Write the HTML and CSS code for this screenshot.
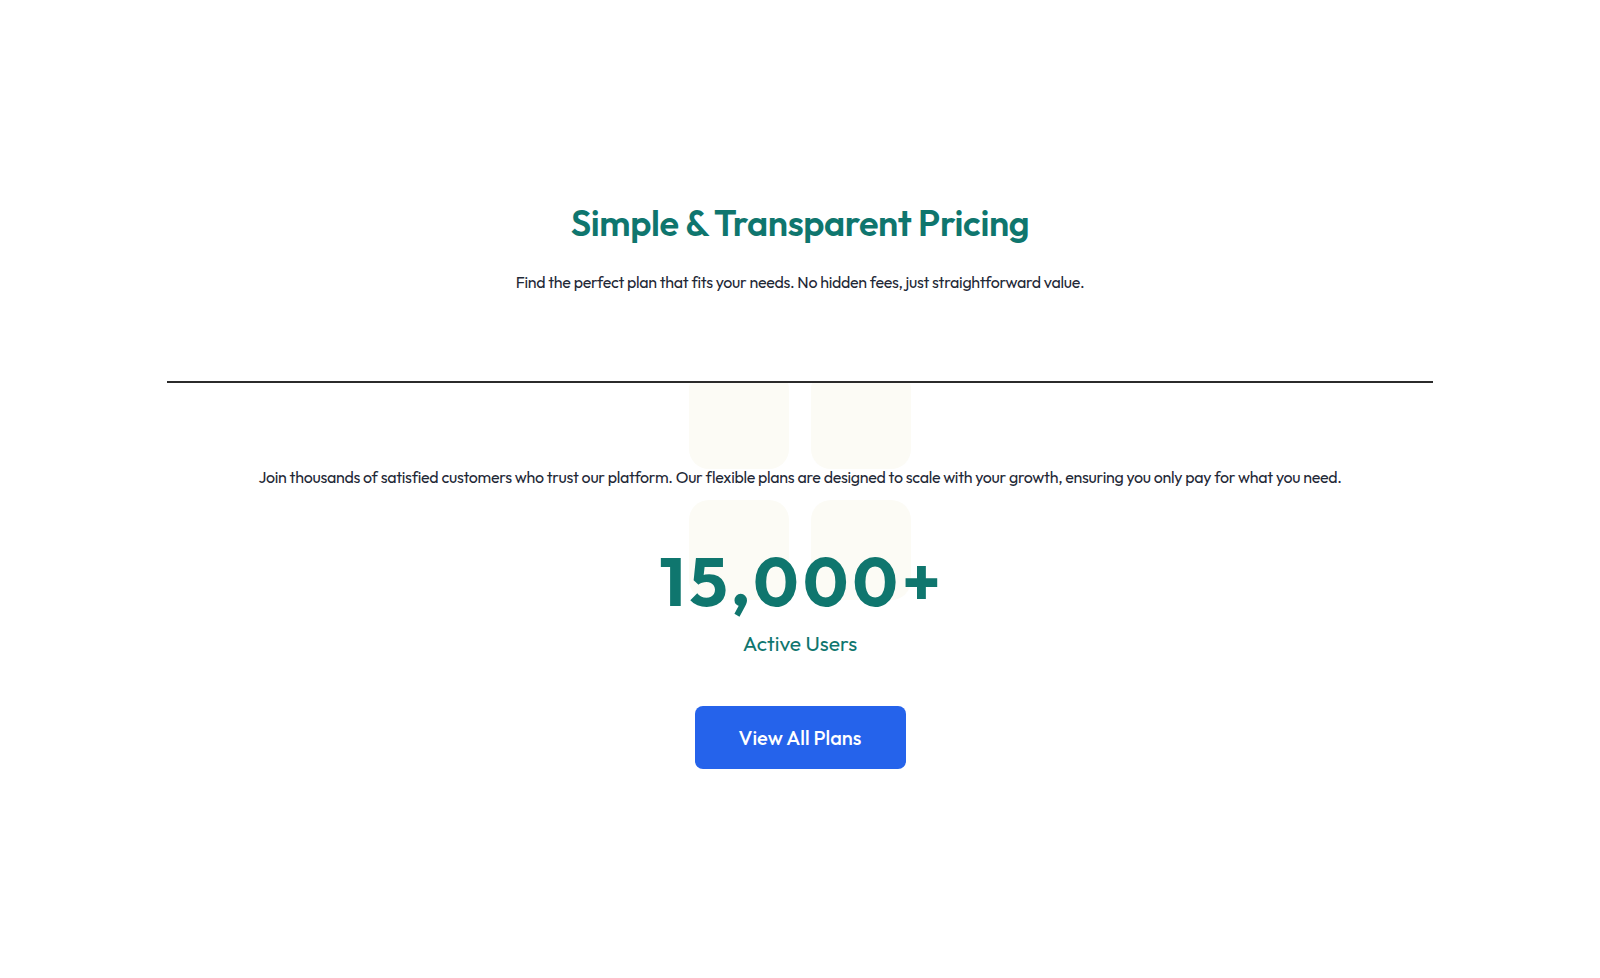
FILE: index.html
```html
<!DOCTYPE html>
<html lang="en">
<head>
<meta charset="utf-8">
<title>Simple &amp; Transparent Pricing</title>
<link rel="stylesheet" href="styles.css">
</head>
<body>
<main class="page">
  <header class="intro">
    <h2 class="intro-title">Simple &amp; Transparent Pricing</h2>
    <p class="intro-sub">Find the perfect plan that fits your needs. No hidden fees, just straightforward value.</p>
  </header>
  <hr class="divider">
  <section class="stats">
    <div class="deco" aria-hidden="true">
      <span class="deco-tile"></span>
      <span class="deco-tile"></span>
      <span class="deco-tile"></span>
      <span class="deco-tile"></span>
    </div>
    <p class="stats-text">Join thousands of satisfied customers who trust our platform. Our flexible plans are designed to scale with your growth, ensuring you only pay for what you need.</p>
    <div class="stat">
      <div class="stat-value">15,000+</div>
      <div class="stat-label">Active Users</div>
    </div>
    <a class="cta" href="#">View All Plans</a>
  </section>
</main>
</body>
</html>
```

FILE: styles.css
```css
* { box-sizing: border-box; }

html, body {
  margin: 0;
  padding: 0;
  background: #ffffff;
}

body {
  font-family: "Outfit", "Lato", "Noto Sans", sans-serif;
  color: #1f2937;
}

.page {
  width: 1266px;
  margin: 0 auto;
  padding-top: 203px;
}

.intro {
  display: flex;
  flex-direction: column;
  align-items: center;
  text-align: center;
}

.intro-title {
  margin: 0;
  font-size: 36px;
  line-height: 40px;
  font-weight: 600;
  letter-spacing: -0.36px;
  color: #0f766e;
}

.intro-sub {
  margin: 27px 0 0;
  font-size: 16px;
  line-height: 24px;
  font-weight: 400;
  letter-spacing: -0.3px;
  color: #1f2937;
}

.divider {
  margin: 87px 0 0;
  border: 0;
  border-top: 2px solid #2b2b2b;
  height: 0;
}

.stats {
  position: relative;
  overflow: hidden;
  display: flex;
  flex-direction: column;
  align-items: center;
  text-align: center;
  padding-top: 82px;
  padding-bottom: 120px;
}

.deco {
  position: absolute;
  top: -14px;
  left: 50%;
  transform: translateX(-50%);
  display: grid;
  grid-template-columns: 100px 100px;
  grid-auto-rows: 100px;
  column-gap: 22px;
  row-gap: 31px;
  z-index: 0;
}

.deco-tile {
  display: block;
  background: #fcfbf5;
  border-radius: 20px;
}

.stats-text,
.stat,
.cta {
  position: relative;
  z-index: 1;
}

.stats-text {
  margin: 0;
  font-size: 16px;
  line-height: 24px;
  font-weight: 400;
  letter-spacing: -0.29px;
  color: #1f2937;
}

.stat {
  margin-top: 58px;
  display: flex;
  flex-direction: column;
  align-items: center;
}

.stat-value {
  font-size: 68px;
  line-height: 68px;
  font-weight: 700;
  letter-spacing: 4.4px;
  padding-left: 4.4px;
  color: #0f766e;
}

.stat-label {
  margin-top: 14px;
  font-size: 21px;
  line-height: 28px;
  font-weight: 400;
  color: #0f766e;
}

.cta {
  margin-top: 49px;
  display: flex;
  align-items: center;
  justify-content: center;
  width: 211px;
  height: 63px;
  border-radius: 8px;
  background: #2563eb;
  color: #ffffff;
  font-size: 20px;
  font-weight: 500;
  text-decoration: none;
}
```
